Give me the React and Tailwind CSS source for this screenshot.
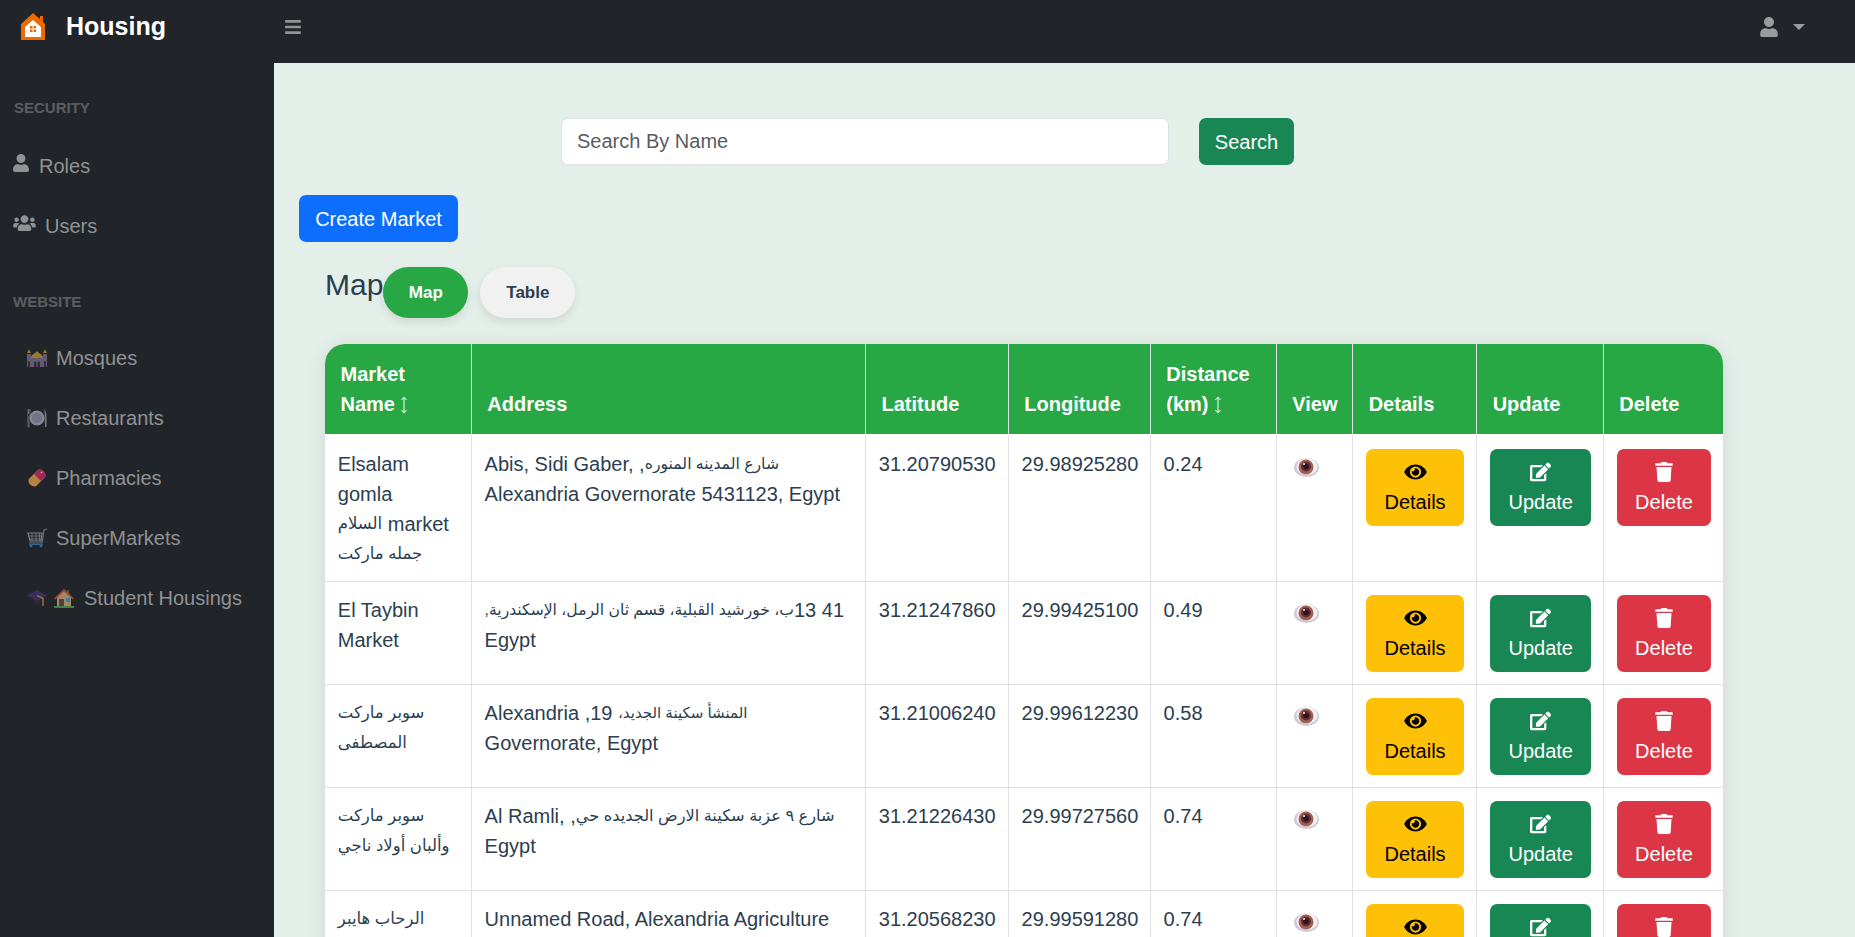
import { FaBars, FaUser, FaUsers, FaEye, FaEdit, FaTrash } from 'react-icons/fa';

function Ar({ children, size = 'text-[16.5px]' }) {
  return <bdi dir="rtl" className={`${size} leading-none relative -top-[1.5px]`}>{children}</bdi>;
}

const markets = [
  {
    name: <>Elsalam<br />gomla<br /><Ar>السلام</Ar> market<br /><Ar>جمله ماركت</Ar></>,
    address: <>Abis, Sidi Gaber, ,<Ar size="text-[15.7px]">شارع المدينه المنوره</Ar><br />Alexandria Governorate 5431123, Egypt</>,
    lat: '31.20790530',
    lng: '29.98925280',
    distance: '0.24',
  },
  {
    name: <>El Taybin<br />Market</>,
    address: <><bdi dir="rtl" className="whitespace-nowrap">41 13<span className="text-[15.6px] leading-none relative -top-[1.5px]">ب، خورشيد القبلية، قسم ثان الرمل، الإسكندرية,</span></bdi><br />Egypt</>,
    lat: '31.21247860',
    lng: '29.99425100',
    distance: '0.49',
  },
  {
    name: <><Ar>سوبر ماركت</Ar><br /><Ar>المصطفى</Ar></>,
    address: <>Alexandria ,19 <Ar size="text-[15px]">المنشأ سكينة الجديد،</Ar><br />Governorate, Egypt</>,
    lat: '31.21006240',
    lng: '29.99612230',
    distance: '0.58',
  },
  {
    name: <><Ar>سوبر ماركت</Ar><br /><Ar>وألبان أولاد ناجي</Ar></>,
    address: <>Al Ramli, ,<Ar size="text-[16.2px]">شارع ٩ عزبة سكينة الارض الجديده حي</Ar><br />Egypt</>,
    lat: '31.21226430',
    lng: '29.99727560',
    distance: '0.74',
  },
  {
    name: <Ar>الرحاب هايبر</Ar>,
    address: 'Unnamed Road, Alexandria Agriculture',
    lat: '31.20568230',
    lng: '29.99591280',
    distance: '0.74',
  },
];

function Logo() {
  return (
    <svg viewBox="0 0 24 28" className="w-[24px] h-[28px]">
      <path d="M12 0 L19 6 V3 H22 V9 L24 11 V27 H0 V11 Z" fill="#ec6a00" />
      <path d="M12 7 L20 14 V24 H4 V14 Z" fill="#fff" />
      <rect x="9" y="13" width="6" height="6" fill="#ec6a00" />
      <path d="M12 13 V19 M9 16 H15" stroke="#fff" strokeWidth="1" />
    </svg>
  );
}

function MosqueIcon() {
  return (
    <svg viewBox="0 0 20 20" className="w-[20px] h-[20px] opacity-60">
      <path d="M0 6 H4 V19 H0 Z M16 6 H20 V19 H16 Z M4 10 H16 V19 H4 Z" fill="#8d7f9e" />
      <path d="M2 1 L4 5 H0 Z M18 1 L20 5 H16 Z" fill="#e0a92e" />
      <path d="M4 10 C4 6 8 6 10 3 C12 6 16 6 16 10 Z" fill="#eab13a" />
      <path d="M7 19 V15 C7 13 9.5 13 9.5 15 V19 Z M10.5 19 V15 C10.5 13 13 13 13 15 V19 Z M1 19 V14 C1 12.5 3 12.5 3 14 V19 Z M17 19 V14 C17 12.5 19 12.5 19 14 V19 Z" fill="#3f2a55" />
    </svg>
  );
}

function PlateIcon() {
  return (
    <svg viewBox="0 0 20 20" className="w-[20px] h-[20px] opacity-60">
      <circle cx="10" cy="10" r="7.5" fill="#c9c5dc" />
      <circle cx="10" cy="10" r="5" fill="#aaa6c4" />
      <path d="M0 1 V6 C0 8 1 8 1 8 V19 H2 V8 C2 8 3 8 3 6 V1 M1.5 1 V6" stroke="#b2b0b8" strokeWidth="0.8" fill="none" />
      <path d="M17.5 1 C19 3 19.5 6 19.5 10 V19 H18 Z" fill="#b2b0b8" />
    </svg>
  );
}

function PillIcon() {
  return (
    <svg viewBox="0 0 20 20" className="w-[20px] h-[20px] opacity-75">
      <path d="M1.8 11 L11 1.8 A5.8 5.8 0 0 1 18.2 9 L9 18.2 A5.8 5.8 0 0 1 1.8 11 Z" fill="#e5a04a" />
      <path d="M7 6 L11 1.8 A5.8 5.8 0 0 1 18.2 9 L14 13 Z" fill="#c9285f" />
      <circle cx="14.5" cy="4.5" r="1" fill="#f2c6d6" />
    </svg>
  );
}

function CartIcon() {
  return (
    <svg viewBox="0 0 20 20" className="w-[20px] h-[20px] opacity-60">
      <path d="M1 5 H15 L14 13 H3 Z" fill="none" stroke="#b9bdc4" strokeWidth="1.2" />
      <path d="M1 8 H15 M2 11 H14 M5 5 V13 M9 5 V13 M12.5 5 V13" stroke="#b9bdc4" strokeWidth="0.8" />
      <path d="M20 1 L17 2 L15 15 H2" fill="none" stroke="#8fa6c9" strokeWidth="1.2" />
      <circle cx="4" cy="18" r="1.4" fill="#4c8fd0" />
      <circle cx="14" cy="18" r="1.4" fill="#4c8fd0" />
      <path d="M2 16.5 H16" stroke="#4c8fd0" strokeWidth="1" />
    </svg>
  );
}

function CapIcon() {
  return (
    <svg viewBox="0 0 20 20" className="w-[20px] h-[20px] opacity-70">
      <path d="M5 9 V14 C7 17 13 17 15 14 V9 Z" fill="#2a2438" />
      <path d="M0 7.5 L10 2 L20 7.5 L10 13 Z" fill="#46347a" />
      <path d="M10 7.5 L16 10.5 V18" stroke="#e3a53a" strokeWidth="1.3" fill="none" />
    </svg>
  );
}

function HouseIcon() {
  return (
    <svg viewBox="0 0 20 20" className="w-[20px] h-[20px] opacity-70">
      <path d="M3 9 L10 3 L17 9 V18 H3 Z" fill="#d9b184" />
      <path d="M13 2 H15 V6 L13 5 Z" fill="#8a5a44" />
      <path d="M0 10.5 L10 1 L20 10.5 L18.5 11.5 L10 3.5 L1.5 11.5 Z" fill="#e0593a" />
      <rect x="5" y="11" width="5" height="7" fill="#6d4a3b" />
      <rect x="12" y="10" width="4" height="4" fill="#3fa6e0" />
      <rect x="0" y="18" width="20" height="2" fill="#4caf50" />
    </svg>
  );
}

function EyeIcon() {
  return (
    <svg viewBox="0 0 25 19" className="w-[25px] h-[19px]">
      <ellipse cx="12.5" cy="9.5" rx="12.5" ry="9.5" fill="#cfc9dc" />
      <ellipse cx="13" cy="8.5" rx="10.5" ry="8.5" fill="#f4f0f6" />
      <circle cx="12" cy="9" r="7.5" fill="#a0634f" />
      <circle cx="12" cy="8.5" r="5" fill="#6a2a35" />
      <circle cx="12" cy="8.5" r="2.8" fill="#2a1518" />
      <circle cx="10" cy="6" r="1.1" fill="#e8dce0" />
    </svg>
  );
}

function SortArrow() {
  return (
    <svg viewBox="0 0 8 18" className="inline-block w-[8px] h-[18px] ml-[5px] align-[-3px]">
      <path d="M4 1 V17 M1.5 4 L4 1 L6.5 4 M1.5 14 L4 17 L6.5 14" stroke="#fff" strokeWidth="1" fill="none" />
    </svg>
  );
}

function NavItem({ icon, label, gap, pad }) {
  return (
    <div className={`h-[60px] flex items-center ${pad} ${gap} text-[20px] text-[#909294]`}>
      {icon}
      <span>{label}</span>
    </div>
  );
}

function ActionButton({ icon, label, className }) {
  return (
    <button className={`h-[77px] rounded-[7px] px-[18.5px] flex flex-col items-center justify-center text-[20px] leading-[30px] ${className}`}>
      <span className="h-[30px] flex items-center">{icon}</span>
      <span>{label}</span>
    </button>
  );
}

const th = 'bg-[#28a745] text-white font-bold text-left align-bottom py-[15px] pl-[15.5px] pr-[10px] leading-[30px] border-x border-b-2 border-x-[#dee2e6] border-b-white first:border-l-0 last:border-r-0';
const td = 'align-top py-[12.5px] px-[12.8px] leading-[30px] border border-[#dee2e6] first:border-l-0 last:border-r-0';

export default function App() {
  return (
    <div className="h-screen overflow-hidden flex flex-col bg-[#e5efe9] text-[20px] text-[#2c3e50] font-['Liberation_Sans',Arial,'DejaVu_Sans',sans-serif]">
      <header className="h-[63px] shrink-0 bg-[#212529] flex items-center pb-[9px]">
        <div className="w-[274px] flex items-center pl-[21px] gap-[21px]">
          <Logo />
          <span className="text-[25px] font-bold text-white">Housing</span>
        </div>
        <FaBars className="ml-[11px] w-[16px] h-[18px] text-[#929496]" />
        <div className="ml-auto mr-[50px] flex items-center gap-[15px] text-[#9a9b9d]">
          <FaUser className="w-[18px] h-[20px]" />
          <span className="w-0 h-0 border-x-[6px] border-x-transparent border-t-[6px] border-t-[#9a9b9d]" />
        </div>
      </header>

      <div className="flex-1 flex min-h-0">
        <aside className="w-[274px] shrink-0 bg-[#212529]">
          <div className="mt-[34px] pl-[14px] text-[15px] leading-[22px] font-bold text-[#5b5e61]">SECURITY</div>
          <div className="mt-[16.5px]">
            <NavItem pad="pl-[13px]" gap="gap-[10px]" icon={<FaUser className="w-[16px] h-[18px] -translate-y-[3px]" />} label="Roles" />
            <NavItem pad="pl-[13px]" gap="gap-[9px]" icon={<FaUsers className="w-[23px] h-[18px] -translate-y-[3px]" />} label="Users" />
          </div>
          <div className="mt-[35px] pl-[13px] text-[15px] leading-[22px] font-bold text-[#5b5e61]">WEBSITE</div>
          <div className="mt-[15px]">
            <NavItem pad="pl-[27px]" gap="gap-[9px]" icon={<MosqueIcon />} label="Mosques" />
            <NavItem pad="pl-[27px]" gap="gap-[9px]" icon={<PlateIcon />} label="Restaurants" />
            <NavItem pad="pl-[27px]" gap="gap-[9px]" icon={<PillIcon />} label="Pharmacies" />
            <NavItem pad="pl-[27px]" gap="gap-[9px]" icon={<CartIcon />} label="SuperMarkets" />
            <NavItem pad="pl-[27px]" gap="gap-[10px]" icon={<span className="flex gap-[7px]"><CapIcon /><HouseIcon /></span>} label="Student Housings" />
          </div>
        </aside>

        <main className="flex-1 min-w-0 overflow-hidden pl-[25px]">
          <div className="mt-[55px] ml-[262px] flex gap-[30px]">
            <input
              placeholder="Search By Name"
              className="w-[608px] h-[47px] px-[15px] bg-white border border-[#dee2e6] rounded-[7px] placeholder:text-[#595c5f]"
            />
            <button className="h-[47px] w-[95px] rounded-[7px] bg-[#198754] text-white">Search</button>
          </div>

          <button className="mt-[30px] block h-[47px] w-[159px] rounded-[7px] bg-[#0d6efd] text-white">Create Market</button>

          <div className="mt-[25px] ml-[26px] flex">
            <h4 className="text-[30px] leading-[36px]">Map</h4>
            <div className="flex gap-[12px] text-[17px] font-bold">
              <button className="h-[51px] w-[85px] rounded-full bg-[#28a745] text-white shadow-[0_4px_10px_rgba(0,0,0,0.1)]">Map</button>
              <button className="h-[51px] w-[95px] rounded-full bg-[#f1f1f1] text-[#2c3e50] shadow-[0_4px_10px_rgba(0,0,0,0.1)]">Table</button>
            </div>
          </div>

          <div className="mt-[26px] ml-[26px] w-[1398px] bg-white rounded-[20px] overflow-hidden shadow-[0_4px_20px_rgba(0,0,0,0.1)]">
            <table className="w-full table-fixed border-collapse">
              <colgroup>
                <col className="w-[146.3px]" />
                <col className="w-[394.2px]" />
                <col className="w-[142.8px]" />
                <col className="w-[142px]" />
                <col className="w-[126px]" />
                <col className="w-[76.4px]" />
                <col className="w-[124px]" />
                <col className="w-[126.6px]" />
                <col className="w-[119.7px]" />
              </colgroup>
              <thead>
                <tr>
                  <th className={th}>Market<br />Name<SortArrow /></th>
                  <th className={th}>Address</th>
                  <th className={th}>Latitude</th>
                  <th className={th}>Longitude</th>
                  <th className={th}>Distance<br />(km)<SortArrow /></th>
                  <th className={th}>View</th>
                  <th className={th}>Details</th>
                  <th className={th}>Update</th>
                  <th className={th}>Delete</th>
                </tr>
              </thead>
              <tbody>
                {markets.map((market) => (
                  <tr key={market.lat}>
                    <td className={td}>{market.name}</td>
                    <td className={td}>{market.address}</td>
                    <td className={td}>{market.lat}</td>
                    <td className={td}>{market.lng}</td>
                    <td className={td}>{market.distance}</td>
                    <td className={td}>
                      <span className="block mt-[9px] ml-[4px]"><EyeIcon /></span>
                    </td>
                    <td className={td}>
                      <ActionButton className="bg-[#ffc107] text-black" label="Details" icon={<FaEye className="w-[23px] h-[20px]" />} />
                    </td>
                    <td className={td}>
                      <ActionButton className="bg-[#198754] text-white" label="Update" icon={<FaEdit className="w-[21px] h-[20px]" />} />
                    </td>
                    <td className={td}>
                      <ActionButton className="bg-[#dc3545] text-white" label="Delete" icon={<FaTrash className="w-[18px] h-[20px]" />} />
                    </td>
                  </tr>
                ))}
              </tbody>
            </table>
          </div>
        </main>
      </div>
    </div>
  );
}
